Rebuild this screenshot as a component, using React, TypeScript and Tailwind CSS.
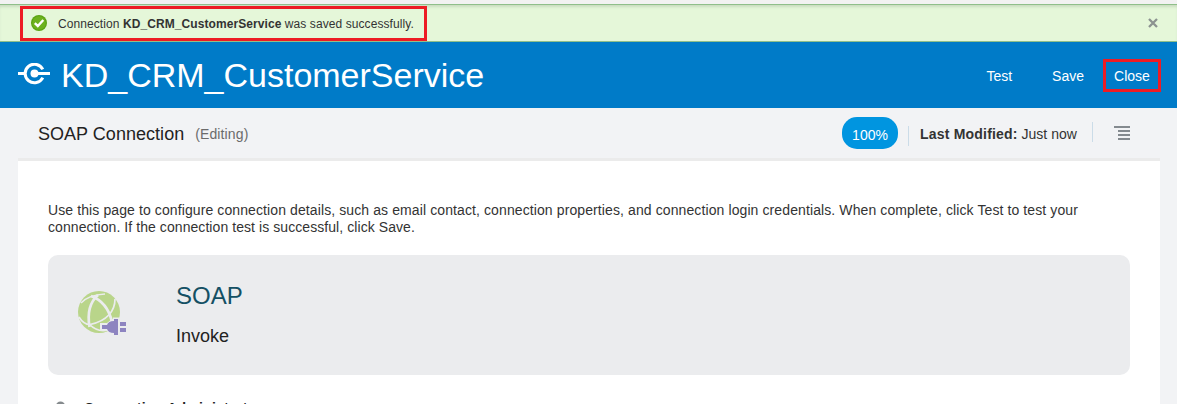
function ConnectionIcon() {
  return (
    <svg width="32" height="22" viewBox="0 0 32 22" fill="none" stroke="#fff" className="mb-[3px] shrink-0">
      <path d="M0 10.500H7.500M16 10.500H32" strokeWidth="3" />
      <path d="M24.800 6.400A9.300 9.300 0 1 0 24.800 14.600" strokeWidth="3" />
      <circle cx="16.500" cy="10.500" r="4" fill="#fff" stroke="none" />
    </svg>
  );
}

function SuccessIcon() {
  return (
    <svg width="16" height="16" viewBox="0 0 16 16" className="mb-px shrink-0">
      <circle cx="8" cy="8" r="8" fill="#5aa312" />
      <circle cx="8" cy="8" r="6.8" fill="#6cb21e" />
      <path d="M3.8 8.2L6.8 11L12.3 5" fill="none" stroke="#fff" strokeWidth="2.4" />
    </svg>
  );
}

function GlobePlugIcon() {
  return (
    <svg width="50" height="46" viewBox="0 0 50 46" className="shrink-0">
      <circle cx="21" cy="21" r="21" fill="#b9d58a" />
      <g fill="none" stroke="#ebecee" strokeLinecap="butt">
        <path d="M3 12C9 5.500 17 3.500 27 3" strokeWidth="1.500" />
        <path d="M20 4C12 11 9 21 11.500 36" strokeWidth="2.700" />
        <path d="M13 5C24 9 31 18 34 31" strokeWidth="2.800" />
        <path d="M37 8C37 19 30 30 12 33.500C8 33.500 4 31 1 26" strokeWidth="1.700" />
        <path d="M11 33C17 39 23 41 30 39" strokeWidth="1.700" />
      </g>
      <path d="M22 32H29L34 28H35V26.500H41V46H35V43H34L29 40H22Z" fill="#ebecee" />
      <path d="M24 34H29C30 31.500 32 30 36 30V28H40V44H36V42C32 42 30 40.500 29 38H24Z" fill="#8d84c0" />
      <path d="M42 31H48V35H42ZM42 37H48V41H42Z" fill="#8d84c0" />
    </svg>
  );
}

function MenuIcon() {
  return (
    <svg width="16" height="14" viewBox="0 0 16 14" fill="#848a8f" className="shrink-0">
      <path d="M0 0H16V2H0ZM4 4H16V6H4ZM4 8H16V10H4ZM4 12H16V14H4Z" />
    </svg>
  );
}

export default function App() {
  return (
    <div className="flex h-[404px] w-[1177px] flex-col overflow-hidden bg-[#f2f3f5] font-['Liberation_Sans',Arial,sans-serif] text-[#333]">
      <div className="h-1 shrink-0 bg-[#f2f2f2]" />
      <div className="flex h-[38px] shrink-0 items-start justify-between border-y border-[#8fbf8a] bg-[#e5f7d9] pt-px pl-5 shadow-[inset_0_3px_3px_-1px_#c9dcc0]">
        <div className="flex h-[35px] w-[407px] items-center border-[3px] border-[#ed1c24] pl-2">
          <SuccessIcon />
          <p className="ml-[11px] whitespace-nowrap text-xs tracking-[0.08px]">
            Connection <b>KD_CRM_CustomerService</b> was saved successfully.
          </p>
        </div>
        <button aria-label="Dismiss" className="mt-3 mr-[19px]">
          <svg width="10" height="10" viewBox="0 0 10 10" stroke="#8c9290" strokeWidth="2.300">
            <path d="M1 1L9 9M9 1L1 9" />
          </svg>
        </button>
      </div>

      <header className="flex h-[66px] shrink-0 items-center bg-[#007bc8] pl-[18px] text-white">
        <ConnectionIcon />
        <h1 className="ml-[11px] whitespace-nowrap text-[34px] leading-10">KD_CRM_CustomerService</h1>
        <nav className="mr-4 ml-auto flex items-center text-sm">
          <button className="pt-0.5">Test</button>
          <button className="ml-10 pt-0.5">Save</button>
          <button className="ml-[19px] h-[33px] w-[58px] border-[3px] border-[#ed1c24] pt-0.5">Close</button>
        </nav>
      </header>

      <main className="mr-[17px] ml-[18px] flex grow flex-col">
        <div className="flex h-[50px] shrink-0 items-center pr-[30px] pl-5">
          <h2 className="pt-0.5 text-lg tracking-[0.03px] text-[#222]">SOAP Connection</h2>
          <span className="ml-[11px] pt-0.5 text-sm tracking-[0.12px] text-[#6b6b6b]">(Editing)</span>
          <span className="ml-auto flex h-8 w-14 items-center justify-center rounded-[15px] bg-[#0095e0] pt-1 text-sm text-white">100%</span>
          <span className="mt-[5px] ml-[10px] h-5 w-px bg-[#cbdce8]" />
          <p className="ml-[11px] w-[158px] pt-0.5 text-sm whitespace-nowrap">
            <b className="tracking-[0.2px]">Last Modified:</b> Just now
          </p>
          <span className="mr-[21px] mb-[3px] ml-[14px] h-5 w-px bg-[#cbdce8]" />
          <MenuIcon />
        </div>

        <section className="h-[246px] border-t-[3px] border-[#ebebeb] bg-white px-[30px] pt-[41px]">
          <p className="text-sm leading-[17px] tracking-[0.103px] whitespace-nowrap">
            Use this page to configure connection details, such as email contact, connection properties, and connection login credentials. When complete, click Test to test your
            <br />
            <span className="tracking-[0.07px]">connection. If the connection test is successful, click Save.</span>
          </p>
          <div className="mt-[19px] flex h-[120px] w-[1082px] items-start rounded-[10px] bg-[#ebecee] pt-[27px] pl-[30px]">
            <div className="pt-[9px]">
              <GlobePlugIcon />
            </div>
            <div className="ml-12">
              <h3 className="text-2xl leading-7 text-[#145064]">SOAP</h3>
              <p className="mt-4 text-lg leading-5 text-[#222]">Invoke</p>
            </div>
          </div>
          <div className="mt-[25px] flex items-start pl-[7px]">
            <svg width="12" height="20" viewBox="0 0 12 20" fill="#858a8d" className="mt-px">
              <circle cx="5.500" cy="5" r="4.500" />
              <path d="M0 18C0 12 2 10 5.500 10S11 12 11 18Z" />
            </svg>
            <h4 className="ml-[17px] text-sm leading-[17px] font-bold tracking-[0.25px] text-[#222]">Connection Administrator</h4>
          </div>
        </section>
      </main>
    </div>
  );
}
